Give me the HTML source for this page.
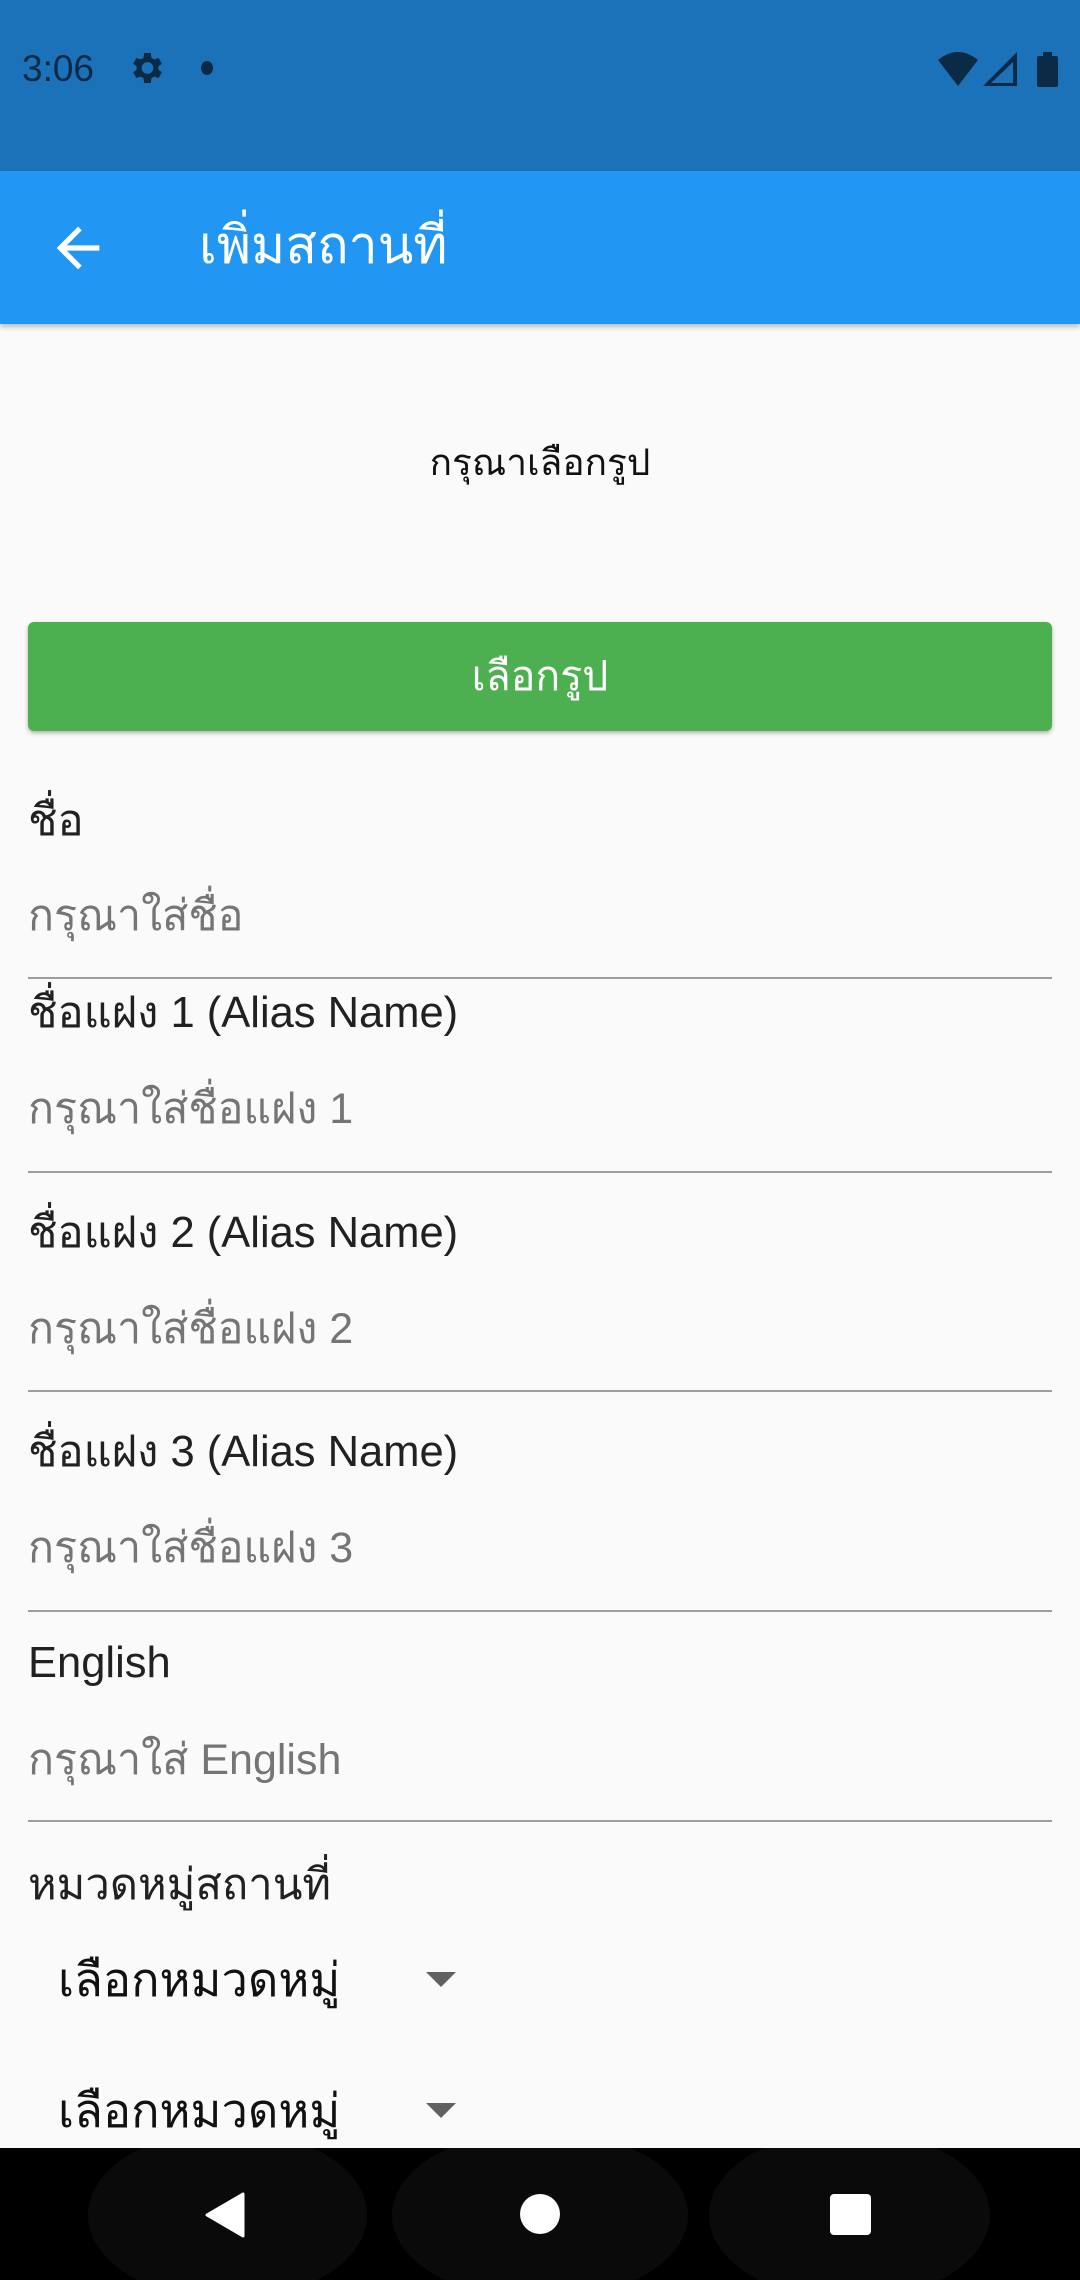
<!DOCTYPE html>
<html><head><meta charset="utf-8"><style>
*{margin:0;padding:0;box-sizing:border-box}
body{width:1080px;height:2280px;background:#fafafa;position:relative;overflow:hidden;font-family:"Liberation Sans","DejaVu Sans",sans-serif;color:#212121}
.t{position:absolute;white-space:nowrap;line-height:1}
.line{position:absolute;left:28px;width:1024px;height:2px;background:#9e9e9e}
.lab{font-size:43.5px;color:#212121;left:28px}
.hint{font-size:43px;color:#757575;left:28px}
</style></head><body>
<div style="position:absolute;left:0;top:0;width:1080px;height:171px;background:#1b72b9"></div>
<div class="t" style="left:22px;top:50px;font-size:37px;color:#0b2a45">3:06</div>
<svg style="position:absolute;left:126px;top:48px" width="40" height="40" viewBox="0 0 24 24"><path fill="#0b2a45" d="M19.4 13a7.5 7.5 0 000-2l2.1-1.6-2-3.5-2.5 1a7.3 7.3 0 00-1.7-1L14.9 3h-4l-.4 2.9a7.3 7.3 0 00-1.7 1l-2.5-1-2 3.5L6.4 11a7.5 7.5 0 000 2l-2.1 1.6 2 3.5 2.5-1c.5.4 1.1.7 1.7 1l.4 2.9h4l.4-2.9c.6-.3 1.2-.6 1.7-1l2.5 1 2-3.5zM12.9 15.5a3.5 3.5 0 110-7 3.5 3.5 0 010 7z"/></svg>
<div style="position:absolute;left:201px;top:61px;width:12px;height:14px;border-radius:50%;background:#0b2a45"></div>
<svg style="position:absolute;left:938px;top:50px" width="122" height="38" viewBox="0 0 122 38"><path fill="#0b2a45" d="M0 10 Q20 -6 40 10 L20 36Z"/><path fill="#0b2a45" d="M45 36 L79 2 V36Z M53 33 L75 33 L75 12Z" fill-rule="evenodd"/><rect x="99" y="6" width="21" height="31" rx="2" fill="#0b2a45"/><rect x="105" y="2" width="9" height="5" fill="#0b2a45"/></svg>
<div style="position:absolute;left:0;top:171px;width:1080px;height:153px;background:#2196f3;box-shadow:0 3px 5px rgba(0,0,0,.25)"></div>
<svg style="position:absolute;left:46px;top:216px" width="64" height="64" viewBox="0 0 24 24"><path fill="#fff" d="M20 11H7.8l5.6-5.6L12 4l-8 8 8 8 1.4-1.4L7.8 13H20z"/></svg>
<div class="t" style="left:199px;top:220px;font-size:52px;color:#fff">เพิ่มสถานที่</div>
<div class="t" style="left:0;width:1080px;text-align:center;top:444px;font-size:37px;color:#111">กรุณาเลือกรูป</div>
<div style="position:absolute;left:28px;top:622px;width:1024px;height:109px;background:#4caf50;border-radius:6px;box-shadow:0 2px 4px rgba(0,0,0,.3)"></div>
<div class="t" style="left:0;width:1080px;text-align:center;top:656px;font-size:41px;color:#fff">เลือกรูป</div>
<div class="t lab" style="top:800px">ชื่อ</div>
<div class="t hint" style="top:895px">กรุณาใส่ชื่อ</div>
<div class="line" style="top:977px"></div>
<div class="t lab" style="top:992px">ชื่อแฝง 1 (Alias Name)</div>
<div class="t hint" style="top:1088px">กรุณาใส่ชื่อแฝง 1</div>
<div class="line" style="top:1171px"></div>
<div class="t lab" style="top:1212px">ชื่อแฝง 2 (Alias Name)</div>
<div class="t hint" style="top:1308px">กรุณาใส่ชื่อแฝง 2</div>
<div class="line" style="top:1390px"></div>
<div class="t lab" style="top:1431px">ชื่อแฝง 3 (Alias Name)</div>
<div class="t hint" style="top:1527px">กรุณาใส่ชื่อแฝง 3</div>
<div class="line" style="top:1610px"></div>
<div class="t lab" style="top:1642px">English</div>
<div class="t hint" style="top:1739px">กรุณาใส่ English</div>
<div class="line" style="top:1820px"></div>
<div class="t lab" style="top:1864px">หมวดหมู่สถานที่</div>
<div class="t" style="left:58px;top:1956px;font-size:47px;color:#111">เลือกหมวดหมู่</div>
<svg style="position:absolute;left:426px;top:1972px" width="30" height="15"><path d="M0 0H30L15 15Z" fill="#616161"/></svg>
<div class="t" style="left:58px;top:2087px;font-size:47px;color:#111">เลือกหมวดหมู่</div>
<svg style="position:absolute;left:426px;top:2103px" width="30" height="15"><path d="M0 0H30L15 15Z" fill="#616161"/></svg>
<div style="position:absolute;left:0;top:2148px;width:1080px;height:132px;background:#000;overflow:hidden">
<div style="position:absolute;left:88px;top:-18px;width:279px;height:170px;border-radius:50%;background:#0a0a0a"></div>
<div style="position:absolute;left:392px;top:-18px;width:296px;height:170px;border-radius:50%;background:#0a0a0a"></div>
<div style="position:absolute;left:709px;top:-18px;width:281px;height:170px;border-radius:50%;background:#0a0a0a"></div>
<svg style="position:absolute;left:205px;top:44px" width="40" height="46"><path d="M38 2V44L2 23Z" fill="#fff" stroke="#fff" stroke-width="3" stroke-linejoin="round"/></svg>
<div style="position:absolute;left:520px;top:46px;width:40px;height:40px;border-radius:50%;background:#fff"></div>
<div style="position:absolute;left:830px;top:46px;width:41px;height:41px;border-radius:4px;background:#fff"></div>
</div>
</body></html>
